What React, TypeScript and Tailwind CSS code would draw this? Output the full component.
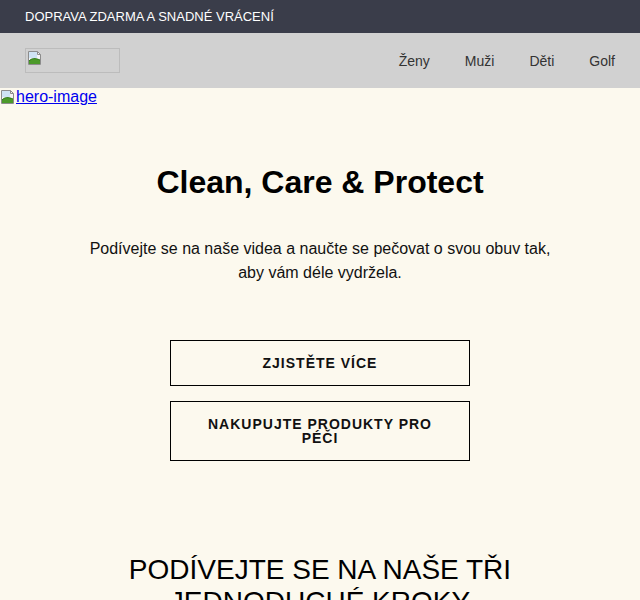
import React from "react";

// small "missing picture" glyph, as browsers show for an image that did not load
const BrokenImage: React.FC = () => (
  <svg width="16" height="16" viewBox="0 0 16 16" className="shrink-0">
    <path d="M1.5 1.5h9l3 3v10h-12z" fill="#f4f4f4" stroke="#8c8c8c" />
    <path d="M10.5 1.5v3h3" fill="none" stroke="#8c8c8c" />
    <rect x="2" y="2" width="8" height="6" fill="#cfe3f3" />
    <path d="M2 14V11c3-3 6-3 11-1v4z" fill="#4c9a2a" />
    <path d="M2 11c3-3 6-3 11-1" fill="none" stroke="#2f7a18" />
  </svg>
);

const navLinks = ["Ženy", "Muži", "Děti", "Golf"];

export default function App() {
  return (
    <div className="min-h-[600px] bg-[#fcf9ee] font-['Liberation_Sans',Arial,sans-serif] text-black">
      {/* promo strip */}
      <div className="flex h-[33px] items-center bg-[#3a3d4a] px-[25px] text-[13px] text-white">
        DOPRAVA ZDARMA A SNADNÉ VRÁCENÍ
      </div>

      {/* header */}
      <header className="flex h-[55px] items-center justify-between bg-[#d1d1d1] pl-[25px] pr-[25px]">
        <div className="flex h-[25px] w-[95px] items-start border border-[#bcbcbc] p-[1px]">
          <BrokenImage />
        </div>
        <nav className="flex gap-[35px] pt-[1px] text-[14px] text-[#333]">
          {navLinks.map((link) => (
            <a key={link} href="#">
              {link}
            </a>
          ))}
        </nav>
      </header>

      <a href="#" className="flex items-center text-[16px] leading-[18px] text-[#0000ee] underline">
        <BrokenImage />
        hero-image
      </a>

      <section className="flex flex-col items-center pt-[58px] text-center">
        <h1 className="text-[32px] font-bold leading-[37px]">Clean, Care &amp; Protect</h1>
        <p className="mt-[36px] max-w-[470px] text-[16px] leading-6 text-[#111]">
          Podívejte se na naše videa a naučte se pečovat o svou obuv tak, aby vám déle vydržela.
        </p>

        <a
          href="#"
          className="mt-[55px] w-[300px] border border-black px-7 py-[15px] text-[14px] font-bold leading-[14px] tracking-[1px] text-[#111]"
        >
          ZJISTĚTE VÍCE
        </a>
        <a
          href="#"
          className="mt-[15px] w-[300px] border border-black px-7 py-[15px] text-[14px] font-bold leading-[14px] tracking-[1px] text-[#111]"
        >
          NAKUPUJTE PRODUKTY PRO PÉČI
        </a>

        <h2 className="mt-[93px] max-w-[420px] text-[28px] leading-[32px] font-normal">
          PODÍVEJTE SE NA NAŠE TŘI JEDNODUCHÉ KROKY
        </h2>
      </section>
    </div>
  );
}
